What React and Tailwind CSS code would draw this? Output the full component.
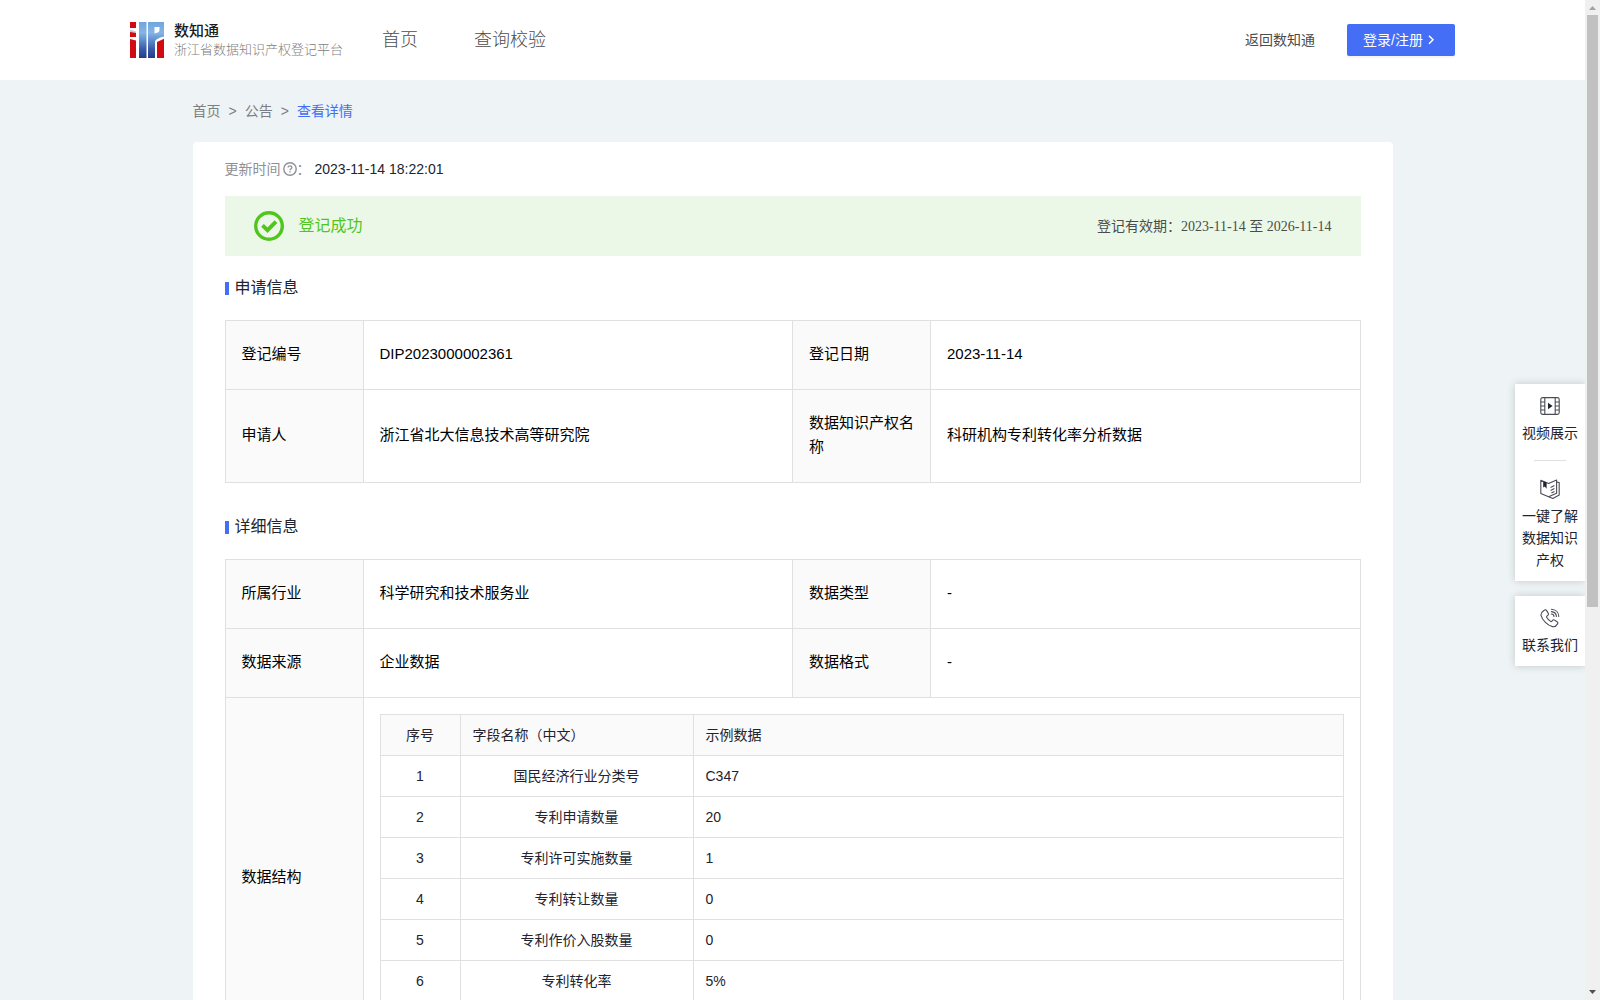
const structureRows = [
  ['1', '国民经济行业分类号', 'C347'],
  ['2', '专利申请数量', '20'],
  ['3', '专利许可实施数量', '1'],
  ['4', '专利转让数量', '0'],
  ['5', '专利作价入股数量', '0'],
  ['6', '专利转化率', '5%'],
];

function Logo() {
  return (
    <svg width="34" height="36" viewBox="0 0 34 36" aria-hidden="true" className="shrink-0">
      <defs>
        <linearGradient id="logoBlue" gradientUnits="userSpaceOnUse" x1="0" y1="0" x2="0" y2="36">
          <stop offset="0" stopColor="#6fa6de" />
          <stop offset="0.3" stopColor="#86b4e6" />
          <stop offset="0.5" stopColor="#5f8fce" />
          <stop offset="0.75" stopColor="#3a5ba8" />
          <stop offset="1" stopColor="#243b86" />
        </linearGradient>
      </defs>
      <rect x="0" y="0" width="6" height="6" fill="#d20a12" />
      <path d="M0 7.5L6 9.5V11H0Z" fill="#c3c8e4" />
      <path d="M0 10L6 11V15H0Z" fill="#d20a12" />
      <path d="M0 17L6 18.5V36H0Z" fill="#d20a12" />
      <rect x="9" y="0" width="7.5" height="36" fill="url(#logoBlue)" />
      <path d="M18 0H34V14.5C30 15.5 26 17 25 19.5V36H18ZM24.5 5V11.5C26.5 10.4 29.5 10.8 29.5 8V5Z" fill="url(#logoBlue)" fillRule="evenodd" />
      <path d="M27 20L34 16.8V36H27Z" fill="#d20a12" />
    </svg>
  );
}

function QuestionIcon() {
  return (
    <svg width="14" height="14" viewBox="0 0 14 14" fill="none" stroke="#8f9095" aria-hidden="true" className="shrink-0">
      <circle cx="7" cy="7" r="6.2" strokeWidth="1.4" />
      <path d="M5.1 5.6C5.1 4.5 5.9 3.8 7 3.8S8.9 4.5 8.9 5.5C8.9 6.7 7 6.8 7 8.3" strokeWidth="1.3" />
      <path d="M7 9.3V10.5" strokeWidth="1.4" />
    </svg>
  );
}

function SuccessIcon() {
  return (
    <svg width="30" height="30" viewBox="0 0 30 30" fill="none" stroke="#50c51e" aria-hidden="true" className="shrink-0">
      <circle cx="15" cy="15" r="13.3" strokeWidth="3.4" />
      <path d="M8.5 14.3L13.5 19.2L22 10.6" strokeWidth="3.8" />
    </svg>
  );
}

function VideoIcon() {
  return (
    <svg width="20" height="20" viewBox="0 0 20 20" fill="none" stroke="#4a4b55" strokeWidth="1.1" aria-hidden="true">
      <rect x="0.8" y="1.6" width="18.4" height="16.8" rx="1.8" />
      <path d="M4.8 1.6V18.4M15.2 1.6V18.4M0.8 6H4.8M0.8 10H4.8M0.8 14H4.8M15.2 6H19.2M15.2 10H19.2M15.2 14H19.2" />
      <path d="M8 6.8V13.2L12.6 10Z" fill="#22232e" stroke="none" />
    </svg>
  );
}

function BookIcon() {
  return (
    <svg width="20" height="20" viewBox="0 0 20 20" fill="none" stroke="#4a4b55" strokeWidth="1.1" strokeLinejoin="round" aria-hidden="true">
      <path d="M0.8 1.2L8.6 4.4L16.6 1V14.2L8.6 17.8L0.8 14.4Z" />
      <path d="M16.8 3L19.2 3.6V16L12.8 19.4L8.8 17.8" />
      <path d="M3.2 2.2V8.6L4.8 7.4L6.6 9.8V3.6Z" fill="#22232e" stroke="none" />
      <path d="M10.6 8.4L14.4 6.6M10.6 11.4L14.4 9.6M11.4 14L14.4 12.6" />
    </svg>
  );
}

function PhoneIcon() {
  return (
    <svg width="20" height="20" viewBox="0 0 20 20" fill="none" stroke="#4a4b55" strokeWidth="1.1" strokeLinejoin="round" strokeLinecap="round" aria-hidden="true">
      <path d="M4.2 2.2C5.2 1.4 6 1.7 6.6 2.6L8.2 5.2C8.7 6.1 8.5 6.8 7.8 7.4L6.9 8.2C6.5 8.6 6.5 9 6.8 9.5C7.7 11 9 12.4 10.6 13.4C11.1 13.7 11.5 13.6 11.9 13.2L12.6 12.4C13.2 11.7 13.9 11.6 14.7 12.1L17 13.7C17.9 14.3 18.1 15 17.5 15.9C16.4 17.8 14.7 19.2 12.4 18.6C7.2 17.2 2.6 12.6 1.1 7.6C0.5 5.4 2.3 3.5 4.2 2.2Z" />
      <path d="M11.4 1.2C15.6 1.4 18.6 4.3 18.8 8.4M11.4 3.6C14.2 3.8 16.2 5.7 16.4 8.4M11.4 6C12.9 6.1 13.9 7 14 8.4" />
    </svg>
  );
}

function SectionTitle({ children }) {
  return (
    <h2 className="mb-5 flex items-center gap-1.5 text-[16px] leading-6 text-[#22232e]">
      <span className="h-[13px] w-1 bg-[#446ef5]" />
      {children}
    </h2>
  );
}

function Label({ children }) {
  return (
    <th scope="row" className="border border-[#e0e0e0] bg-[#fafafa] px-4 pt-[21px] pb-[23px] text-left font-normal">
      {children}
    </th>
  );
}

function Value({ children }) {
  return <td className="border border-[#e0e0e0] px-4 pt-[21px] pb-[23px]">{children}</td>;
}

function InfoTable({ rows, children }) {
  return (
    <table className="w-full table-fixed border-collapse text-[15px] leading-6 text-black">
      <colgroup>
        <col className="w-[138px]" />
        <col />
        <col className="w-[138px]" />
        <col />
      </colgroup>
      <tbody>
        {rows.map((r) => (
          <tr key={r[0]}>
            <Label>{r[0]}</Label>
            <Value>{r[1]}</Value>
            <Label>{r[2]}</Label>
            <Value>{r[3]}</Value>
          </tr>
        ))}
        {children}
      </tbody>
    </table>
  );
}

function StructureTable() {
  return (
    <table className="w-full table-fixed border-collapse text-[14px] leading-[22px] text-[#22232e]">
      <colgroup>
        <col className="w-20" />
        <col className="w-[233px]" />
        <col />
      </colgroup>
      <thead>
        <tr className="h-[41px] bg-[#fafafa]">
          <th className="border border-[#e0e0e0] px-3 text-center font-normal">序号</th>
          <th className="border border-[#e0e0e0] px-3 text-left font-normal">字段名称（中文）</th>
          <th className="border border-[#e0e0e0] px-3 text-left font-normal">示例数据</th>
        </tr>
      </thead>
      <tbody>
        {structureRows.map((r) => (
          <tr key={r[0]} className="h-[41px]">
            <td className="border border-[#e0e0e0] px-3 text-center">{r[0]}</td>
            <td className="border border-[#e0e0e0] px-3 text-center">{r[1]}</td>
            <td className="border border-[#e0e0e0] px-3">{r[2]}</td>
          </tr>
        ))}
      </tbody>
    </table>
  );
}

function SideTools() {
  const item = 'flex w-full flex-col items-center gap-1.5 px-1.5 text-center';
  return (
    <aside className="absolute top-96 right-0 flex w-[70px] flex-col gap-[15px] text-[14px] leading-[22px] text-[#22232e]">
      <div className="flex flex-col items-center bg-white pt-3 pb-2.5 shadow-[0_0_8px_rgba(0,0,0,0.18)]">
        <button type="button" className={item}>
          <VideoIcon />
          视频展示
        </button>
        <hr className="mt-4 mb-[18px] w-8 border-[#e0e0e0]" />
        <button type="button" className={item}>
          <BookIcon />
          一键了解数据知识产权
        </button>
      </div>
      <div className="bg-white pt-3 pb-2.5 shadow-[0_0_8px_rgba(0,0,0,0.18)]">
        <button type="button" className={item}>
          <PhoneIcon />
          联系我们
        </button>
      </div>
    </aside>
  );
}

function ScrollBar() {
  return (
    <div aria-hidden="true" className="flex w-[15px] shrink-0 flex-col items-center bg-[#f0f0f0]">
      <svg width="15" height="15" viewBox="0 0 15 15" className="shrink-0">
        <path d="M4 10L7.5 6L11 10Z" fill="#a3a3a3" />
      </svg>
      <div className="min-h-0 flex-1 self-stretch px-0.5">
        <div className="h-[61%] bg-[#c1c1c1]" />
      </div>
      <svg width="15" height="15" viewBox="0 0 15 15" className="shrink-0">
        <path d="M4 5L7.5 9L11 5Z" fill="#505050" />
      </svg>
    </div>
  );
}

export default function App() {
  return (
    <div className="flex h-screen overflow-hidden bg-[#eef3f6] font-['Liberation_Sans','Noto_Sans_CJK_SC',sans-serif]">
      <div className="relative min-w-0 flex-1 overflow-hidden">
        <header className="flex h-20 items-center bg-white px-[130px] text-[#4c4c4c]">
          <a href="#home" className="flex items-center gap-2.5 whitespace-nowrap">
            <Logo />
            <span className="flex flex-col">
              <span className="text-[15px] leading-5 font-medium text-[#1c1c1c]">数知通</span>
              <span className="text-[13px] leading-[18px] font-light text-[#808080]">浙江省数据知识产权登记平台</span>
            </span>
          </a>
          <nav className="ml-[39px] flex gap-14 text-[18px] leading-6 font-light">
            <a href="#index">首页</a>
            <a href="#verify">查询校验</a>
          </nav>
          <div className="ml-auto flex items-center gap-8 text-[14px]">
            <a href="#back">返回数知通</a>
            <button type="button" className="flex h-8 w-[108px] items-center gap-1 rounded-xs bg-[#446ef5] px-4 text-white shadow-[0_2px_0_rgba(0,0,0,0.04)]">
              登录/注册
              <svg width="8" height="12" viewBox="0 0 8 12" fill="none" stroke="currentColor" strokeWidth="1.5" aria-hidden="true">
                <path d="M2 1.8L6 5.8L2 9.8" />
              </svg>
            </button>
          </div>
        </header>

        <main className="mx-auto max-w-[1200px]">
          <nav className="flex h-[62px] items-center gap-2 text-[14px] text-[#7d7e82]">
            <a href="#index">首页</a>
            <span>&gt;</span>
            <a href="#notice">公告</a>
            <span>&gt;</span>
            <a href="#detail" className="text-[#446ef5]">查看详情</a>
          </nav>

          <section className="rounded-sm bg-white px-8 py-4">
            <div className="flex items-center text-[14px] leading-[22px]">
              <span className="flex items-center gap-0.5 text-[#8f9095]">
                更新时间
                <QuestionIcon />
              </span>
              <span className="mr-1 text-[#8f9095]">：</span>
              <time className="text-[#22232e]">2023-11-14 18:22:01</time>
            </div>

            <div className="mt-4 mb-5 flex h-[60px] items-center gap-[15px] bg-[#ebf8e7] px-[29px]">
              <SuccessIcon />
              <span className="text-[16px] text-[#50c51e]">登记成功</span>
              <span className="ml-auto font-['Liberation_Serif','Noto_Sans_CJK_SC',serif] text-[14px] text-[#4c4c4c]">
                登记有效期：2023-11-14 至 2026-11-14
              </span>
            </div>

            <SectionTitle>申请信息</SectionTitle>
            <InfoTable
              rows={[
                ['登记编号', 'DIP2023000002361', '登记日期', '2023-11-14'],
                ['申请人', '浙江省北大信息技术高等研究院', '数据知识产权名称', '科研机构专利转化率分析数据'],
              ]}
            />

            <div className="h-8" />
            <SectionTitle>详细信息</SectionTitle>
            <InfoTable
              rows={[
                ['所属行业', '科学研究和技术服务业', '数据类型', '-'],
                ['数据来源', '企业数据', '数据格式', '-'],
              ]}
            >
              <tr className="h-[361px]">
                <Label>数据结构</Label>
                <td colSpan={3} className="border border-[#e0e0e0] p-4 align-top">
                  <StructureTable />
                </td>
              </tr>
            </InfoTable>
          </section>
        </main>

        <SideTools />
      </div>
      <ScrollBar />
    </div>
  );
}
